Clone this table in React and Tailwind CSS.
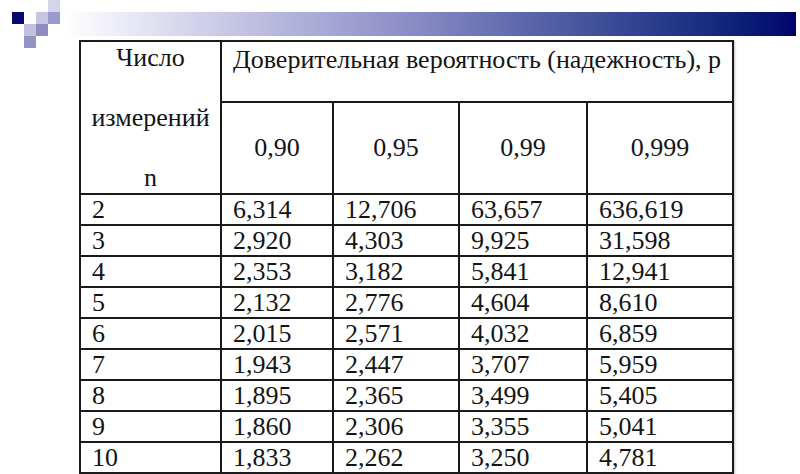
import React from "react";

const rows = [
  ["2", "6,314", "12,706", "63,657", "636,619"],
  ["3", "2,920", "4,303", "9,925", "31,598"],
  ["4", "2,353", "3,182", "5,841", "12,941"],
  ["5", "2,132", "2,776", "4,604", "8,610"],
  ["6", "2,015", "2,571", "4,032", "6,859"],
  ["7", "1,943", "2,447", "3,707", "5,959"],
  ["8", "1,895", "2,365", "3,499", "5,405"],
  ["9", "1,860", "2,306", "3,355", "5,041"],
  ["10", "1,833", "2,262", "3,250", "4,781"],
];

function Logo() {
  return (
    <svg className="absolute left-0 top-0" width="60" height="48" viewBox="0 0 60 48">
      <rect x="48" y="0" width="12" height="12" fill="#d4d4ea" />
      <rect x="12" y="12" width="12" height="12" fill="#0a0a6e" />
      <rect x="36" y="12" width="12" height="12" fill="#c6c6e2" />
      <rect x="48" y="12" width="12" height="12" fill="#9a9acc" />
      <rect x="24" y="24" width="12" height="12" fill="#c2c2de" />
      <rect x="36" y="24" width="12" height="12" fill="#8d8dc0" />
      <rect x="24" y="36" width="12" height="12" fill="#9494c4" />
    </svg>
  );
}

export default function App() {
  return (
    <div className="relative w-[800px] h-[474px] overflow-hidden bg-white text-[#141414] font-['Liberation_Serif']">
      <div className="mt-[12px] h-[24px] w-[796px] bg-gradient-to-r from-[#ffffff] from-[8%] via-[#9090c8] via-[50%] to-[#02026a]" />
      <Logo />
      <div className="ml-[79px] mt-[4px]">
        <table className="table-fixed border-collapse border-2 border-[#2a2a2a] text-[26px] leading-none text-[#141414] font-['Liberation_Serif'] shadow-[1px_1px_2px_rgba(0,0,0,0.25)]">
          <colgroup>
            <col className="w-[141px]" />
            <col className="w-[112px]" />
            <col className="w-[126px]" />
            <col className="w-[128px]" />
            <col className="w-[146px]" />
          </colgroup>
          <thead>
            <tr className="h-[61px]">
              <td rowSpan={2} className="border-2 border-[#1a1a1a] p-0 align-top">
                <div className="flex flex-col items-center gap-[30px] pt-[1px] font-normal">
                  <div className="leading-[30px]">Число</div>
                  <div className="leading-[30px]">измерений</div>
                  <div className="leading-[30px]">n</div>
                </div>
              </td>
              <td colSpan={4} className="border-2 border-[#1a1a1a] p-0 pl-[11px] align-top">
                <div className="pt-[3px] leading-[30px] whitespace-nowrap">
                  Доверительная вероятность (надежность), p
                </div>
              </td>
            </tr>
            <tr className="h-[91px]">
              {["0,90", "0,95", "0,99", "0,999"].map((v) => (
                <td key={v} className="border-2 border-[#1a1a1a] p-0 text-center align-middle">
                  {v}
                </td>
              ))}
            </tr>
          </thead>
          <tbody>
            {rows.map((r) => (
              <tr key={r[0]} className="h-[31px]">
                {r.map((c, i) => (
                  <td key={i} className="border-2 border-[#1a1a1a] p-0 pl-[11px] align-middle">
                    {c}
                  </td>
                ))}
              </tr>
            ))}
          </tbody>
        </table>
      </div>
    </div>
  );
}
